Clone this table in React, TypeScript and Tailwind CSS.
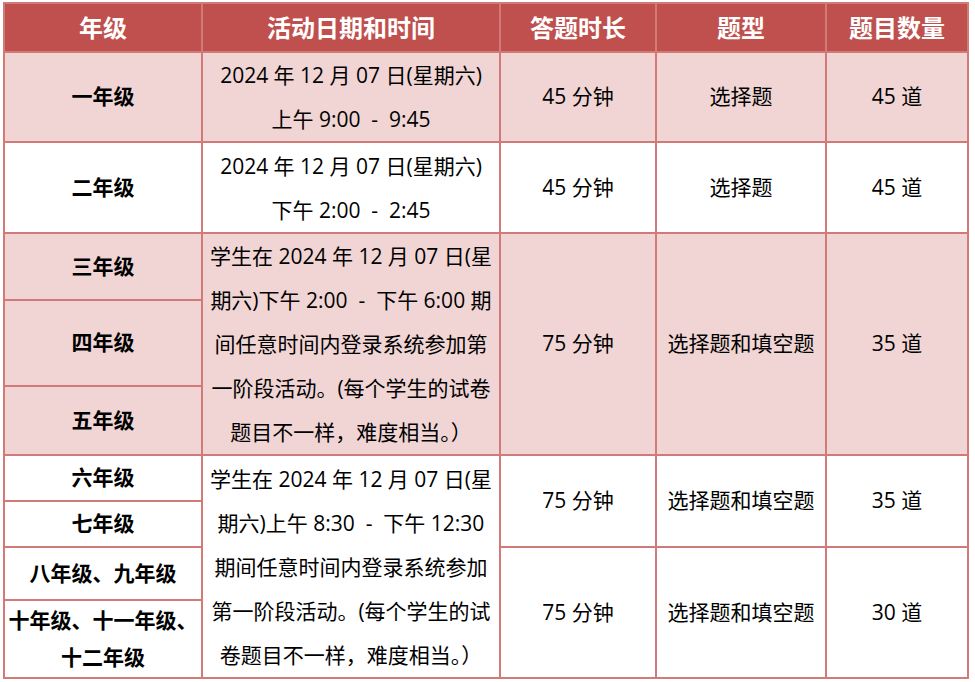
import React from "react";

const font = { fontFamily: '"Open Sans", "Noto Sans CJK SC", sans-serif' };

const pink = "bg-[#F0D5D4]";
const white = "bg-white";

function Cell({
  children,
  className = "",
}: {
  children: React.ReactNode;
  className?: string;
}) {
  return (
    <div
      className={`flex flex-col items-center justify-center text-center text-[21px] text-black ${className}`}
    >
      {children}
    </div>
  );
}

function Lines({ lines }: { lines: string[] }) {
  return (
    <div className="leading-[44px] whitespace-pre">
      {lines.map((l, i) => (
        <div key={i}>{l}</div>
      ))}
    </div>
  );
}

export default function App() {
  return (
    <div className="bg-white w-[975px] h-[682px] pt-[2px] pl-[3px]" style={font}>
      <div className="grid w-[966px] gap-[2px] p-[2px] bg-[#D27A77] grid-cols-[196px_296px_154px_168px_140px] grid-rows-[47px_88px_89px_65px_84px_67px_44px_44px_51px_76px]">
        {["年级", "活动日期和时间", "答题时长", "题型", "题目数量"].map((h) => (
          <Cell key={h} className="bg-[#C0504D] text-white font-bold text-[24px]">
            {h}
          </Cell>
        ))}

        {/* 一年级 */}
        <Cell className={`${pink} font-bold`}>一年级</Cell>
        <Cell className={pink}>
          <Lines lines={["2024 年 12 月 07 日(星期六)", "上午 9:00  -  9:45"]} />
        </Cell>
        <Cell className={pink}>45 分钟</Cell>
        <Cell className={pink}>选择题</Cell>
        <Cell className={pink}>45 道</Cell>

        {/* 二年级 */}
        <Cell className={`${white} font-bold`}>二年级</Cell>
        <Cell className={white}>
          <Lines lines={["2024 年 12 月 07 日(星期六)", "下午 2:00  -  2:45"]} />
        </Cell>
        <Cell className={white}>45 分钟</Cell>
        <Cell className={white}>选择题</Cell>
        <Cell className={white}>45 道</Cell>

        {/* 三~五年级 */}
        <Cell className={`${pink} font-bold col-start-1 row-start-4`}>三年级</Cell>
        <Cell className={`${pink} col-start-2 row-start-4 row-span-3`}>
          <Lines
            lines={[
              "学生在 2024 年 12 月 07 日(星",
              "期六)下午 2:00  -  下午 6:00 期",
              "间任意时间内登录系统参加第",
              "一阶段活动。(每个学生的试卷",
              "题目不一样，难度相当。）",
            ]}
          />
        </Cell>
        <Cell className={`${pink} col-start-3 row-start-4 row-span-3`}>75 分钟</Cell>
        <Cell className={`${pink} col-start-4 row-start-4 row-span-3`}>选择题和填空题</Cell>
        <Cell className={`${pink} col-start-5 row-start-4 row-span-3`}>35 道</Cell>
        <Cell className={`${pink} font-bold col-start-1 row-start-5`}>四年级</Cell>
        <Cell className={`${pink} font-bold col-start-1 row-start-6`}>五年级</Cell>

        {/* 六~十二年级 */}
        <Cell className={`${white} font-bold col-start-1 row-start-7`}>六年级</Cell>
        <Cell className={`${white} col-start-2 row-start-7 row-span-4`}>
          <Lines
            lines={[
              "学生在 2024 年 12 月 07 日(星",
              "期六)上午 8:30  -  下午 12:30",
              "期间任意时间内登录系统参加",
              "第一阶段活动。(每个学生的试",
              "卷题目不一样，难度相当。）",
            ]}
          />
        </Cell>
        <Cell className={`${white} col-start-3 row-start-7 row-span-2`}>75 分钟</Cell>
        <Cell className={`${white} col-start-4 row-start-7 row-span-2`}>选择题和填空题</Cell>
        <Cell className={`${white} col-start-5 row-start-7 row-span-2`}>35 道</Cell>
        <Cell className={`${white} font-bold col-start-1 row-start-8`}>七年级</Cell>
        <Cell className={`${white} font-bold col-start-1 row-start-9`}>八年级、九年级</Cell>
        <Cell className={`${white} font-bold col-start-1 row-start-10 leading-[37px]`}>
          <div>十年级、十一年级、</div>
          <div>十二年级</div>
        </Cell>
        <Cell className={`${white} col-start-3 row-start-9 row-span-2`}>75 分钟</Cell>
        <Cell className={`${white} col-start-4 row-start-9 row-span-2`}>选择题和填空题</Cell>
        <Cell className={`${white} col-start-5 row-start-9 row-span-2`}>30 道</Cell>
      </div>
    </div>
  );
}
